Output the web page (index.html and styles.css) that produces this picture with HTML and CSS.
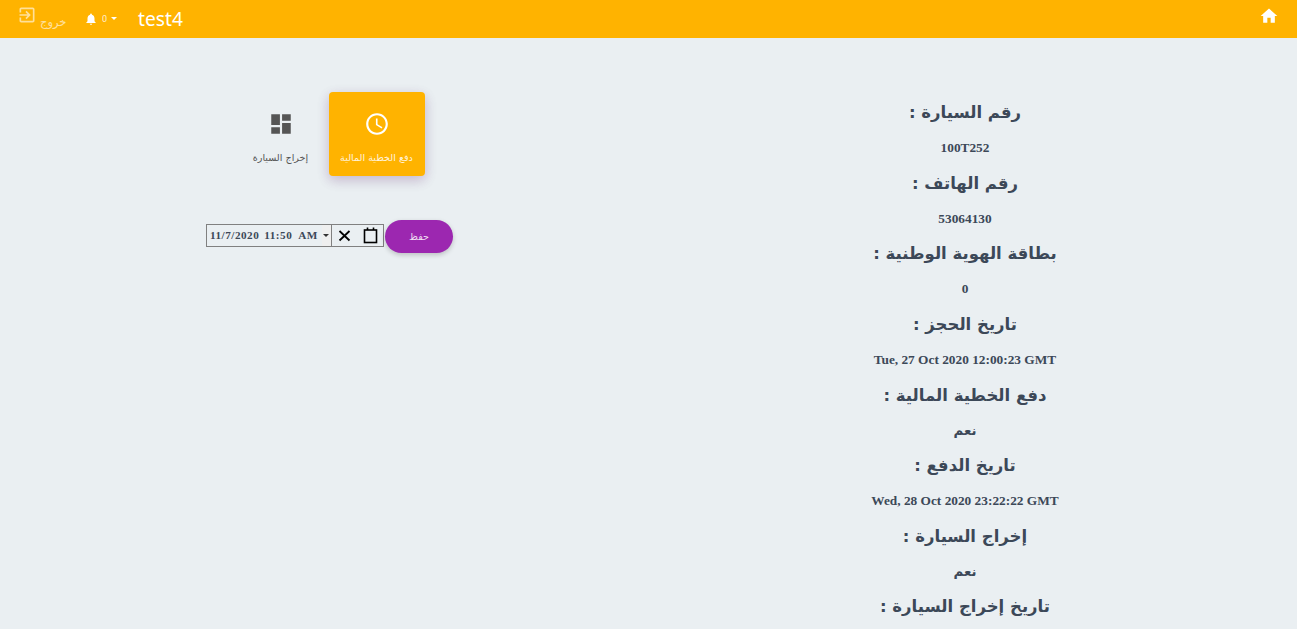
FILE: index.html
```html
<!DOCTYPE html>
<html lang="ar">
<head>
    <meta charset="UTF-8">
    <title>test4</title>
    <link rel="stylesheet" href="styles.css">
</head>
<body>
    <nav class="navbar">
        <a class="nav-logout" href="#">
            <svg width="20" height="20" viewBox="0 0 24 24"><path d="M10.09 15.59 11.5 17l5-5-5-5-1.41 1.41L12.67 11H3v2h9.67l-2.58 2.59zM19 3H5c-1.11 0-2 .9-2 2v4h2V5h14v14H5v-4H3v4c0 1.1.89 2 2 2h14c1.1 0 2-.9 2-2V5c0-1.1-.9-2-2-2z"/></svg>
            <span class="nav-logout-text">خروج</span>
        </a>
        <a class="nav-bell" href="#">
            <svg width="14" height="14" viewBox="0 0 24 24"><path d="M12 22c1.1 0 2-.9 2-2h-4c0 1.1.9 2 2 2zm6-6v-5c0-3.07-1.63-5.64-4.5-6.32V4c0-.83-.67-1.5-1.5-1.5s-1.5.67-1.5 1.5v.68C7.64 5.36 6 7.92 6 11v5l-2 2v1h16v-1l-2-2z"/></svg>
            <span class="nav-count">0</span>
            <span class="caret"></span>
        </a>
        <span class="nav-title">test4</span>
        <a class="nav-home" href="#">
            <svg width="20" height="20" viewBox="0 0 24 24"><path d="M10 20v-6h4v6h5v-8h3L12 3 2 12h3v8z"/></svg>
        </a>
    </nav>

    <main class="content">
        <section class="left-col">
            <div class="tabs">
                <a class="tab" href="#">
                    <svg class="tab-icon" width="26" height="26" viewBox="0 0 24 24"><path d="M3 13h8V3H3v10zm0 8h8v-6H3v6zm10 0h8V11h-8v10zm0-18v6h8V3h-8z"/></svg>
                    <span>إخراج السيارة</span>
                </a>
                <a class="tab tab-active" href="#">
                    <svg class="tab-icon" width="26" height="26" viewBox="0 0 24 24"><path d="M11.99 2C6.47 2 2 6.48 2 12s4.47 10 9.99 10C17.52 22 22 17.52 22 12S17.52 2 11.99 2zM12 20c-4.42 0-8-3.58-8-8s3.58-8 8-8 8 3.58 8 8-3.58 8-8 8zm.5-13H11v6l5.25 3.15.75-1.23-4.5-2.67z"/></svg>
                    <span class="tab-label">دفع الخطية المالية</span>
                </a>
            </div>
            <form class="date-form">
                <div class="date-picker">
                    <span class="date-value">11/7/2020</span>
                    <span class="date-value">11:50</span>
                    <span class="date-value date-ampm">AM</span>
                    <span class="ampm-arrow"></span>
                    <span class="date-btn">
                        <svg width="19" height="19" viewBox="0 0 19 19"><path d="M4.500 5l10 9.500M14.500 5l-10 9.500" stroke="#000" stroke-width="1.800"/></svg>
                    </span>
                    <span class="date-btn">
                        <svg width="19" height="19" viewBox="0 0 19 19" fill="none" stroke="#000" stroke-width="1.600"><rect x="3.500" y="4" width="12" height="12.500"/><path d="M6.500 1.500v2.500M12.500 1.500v2.500"/></svg>
                    </span>
                </div>
                <button class="save-btn" type="button">حفظ</button>
            </form>
        </section>

        <section class="right-col">
            <h4>رقم السيارة :</h4>
            <p>100T252</p>
            <h4>رقم الهاتف :</h4>
            <p>53064130</p>
            <h4>بطاقة الهوية الوطنية :</h4>
            <p>0</p>
            <h4>تاريخ الحجز :</h4>
            <p>Tue, 27 Oct 2020 12:00:23 GMT</p>
            <h4>دفع الخطية المالية :</h4>
            <p>نعم</p>
            <h4>تاريخ الدفع :</h4>
            <p>Wed, 28 Oct 2020 23:22:22 GMT</p>
            <h4>إخراج السيارة :</h4>
            <p>نعم</p>
            <h4>تاريخ إخراج السيارة :</h4>
        </section>
    </main>
</body>
</html>
```

FILE: styles.css
```css
* {
    box-sizing: border-box;
}
html, body {
    height: 629px;
    overflow: hidden;
}
body {
    margin: 0;
    background-color: #eaeff2;
    color: #3c4858;
    font-family: "Liberation Serif", "DejaVu Sans", serif;
}
a {
    color: inherit;
    text-decoration: none;
}

.navbar {
    height: 38px;
    background-color: #ffb300;
    color: white;
    display: flex;
    align-items: center;
    padding: 0 19px;
}
.navbar svg {
    fill: currentColor;
    display: block;
}
.nav-logout {
    display: flex;
    opacity: 0.6;
    width: 67px;
    margin-top: -5px;
    margin-left: -2px;
}
.nav-logout-text {
    font-family: "DejaVu Sans", sans-serif;
    font-size: 11.500px;
    margin: 10px 0 0 3px;
}
.nav-bell {
    display: flex;
    align-items: center;
}
.nav-count {
    font-family: "Roboto", sans-serif;
    font-size: 9px;
    margin: 0 4px 0 4px;
    opacity: 0.8;
}
.caret {
    border-top: 3px solid white;
    border-left: 3.500px solid transparent;
    border-right: 3.500px solid transparent;
    margin-top: -2px;
}
.nav-title {
    font-family: "Noto Sans", sans-serif;
    font-size: 19.200px;
    margin-left: 21px;
    margin-top: -1px;
}
.nav-home {
    margin-left: auto;
    margin-right: -1px;
    margin-top: -6px;
}

.content {
    display: grid;
    grid-template-columns: 659px 612px;
}
.left-col {
    display: flex;
    flex-direction: column;
    align-items: center;
    padding-top: 54px;
}
.tabs {
    display: flex;
    margin-left: -2px;
}
.tab {
    width: 96px;
    height: 84px;
    display: flex;
    flex-direction: column;
    align-items: center;
    font-family: "DejaVu Sans", sans-serif;
    font-size: 9.600px;
    color: #555555;
    border-radius: 4px;
    padding-top: 19px;
}
.tab-icon {
    fill: currentColor;
    margin-bottom: 15px;
}
.tab-active {
    background-color: #ffb300;
    color: white;
    box-shadow: 0 4px 12px rgba(156, 39, 176, 0.15), 0 4px 14px rgba(0, 0, 0, 0.12);
}
.tab-label {
    opacity: 0.85;
}

.date-form {
    display: flex;
    align-items: center;
    margin-top: 44px;
}
.date-picker {
    width: 178px;
    height: 23px;
    margin-top: -2px;
    border: 1px solid #808080;
    display: flex;
    align-items: center;
    padding: 0 0 2px 3px;
    font-size: 11.200px;
    font-weight: bold;
    letter-spacing: 0.5px;
    color: #3c4858;
}
.date-value {
    margin-right: 5px;
}
.date-ampm {
    margin-left: 1px;
    margin-right: 4px;
}
.ampm-arrow {
    width: 10px;
    height: 21px;
    margin-bottom: -2px;
    border-right: 1px solid #808080;
    background-color: #efefef;
    display: flex;
    align-items: center;
    justify-content: center;
}
.ampm-arrow::after {
    content: "";
    border-top: 3px solid #333333;
    border-left: 3px solid transparent;
    border-right: 3px solid transparent;
}
.date-btn {
    width: 26px;
    margin-bottom: -2px;
    display: flex;
    justify-content: center;
}
.save-btn {
    width: 68px;
    height: 33px;
    margin-left: 1px;
    background-color: #9c27b0;
    color: rgba(255, 255, 255, 0.85);
    border: none;
    border-radius: 17px;
    font-family: "DejaVu Sans", sans-serif;
    font-size: 9.600px;
    font-weight: normal;
    box-shadow: 0 2px 5px rgba(0, 0, 0, 0.2);
}

.right-col {
    text-align: center;
    direction: rtl;
    padding-top: 62.200px;
}
.right-col h4 {
    font-family: "DejaVu Sans", sans-serif;
    font-size: 16.500px;
    font-weight: bold;
    line-height: 26px;
    margin: 0;
}
.right-col p {
    font-size: 13.330px;
    font-weight: bold;
    line-height: 18px;
    margin: 0;
    padding: 13px 0 13.600px;
    direction: ltr;
}
```
